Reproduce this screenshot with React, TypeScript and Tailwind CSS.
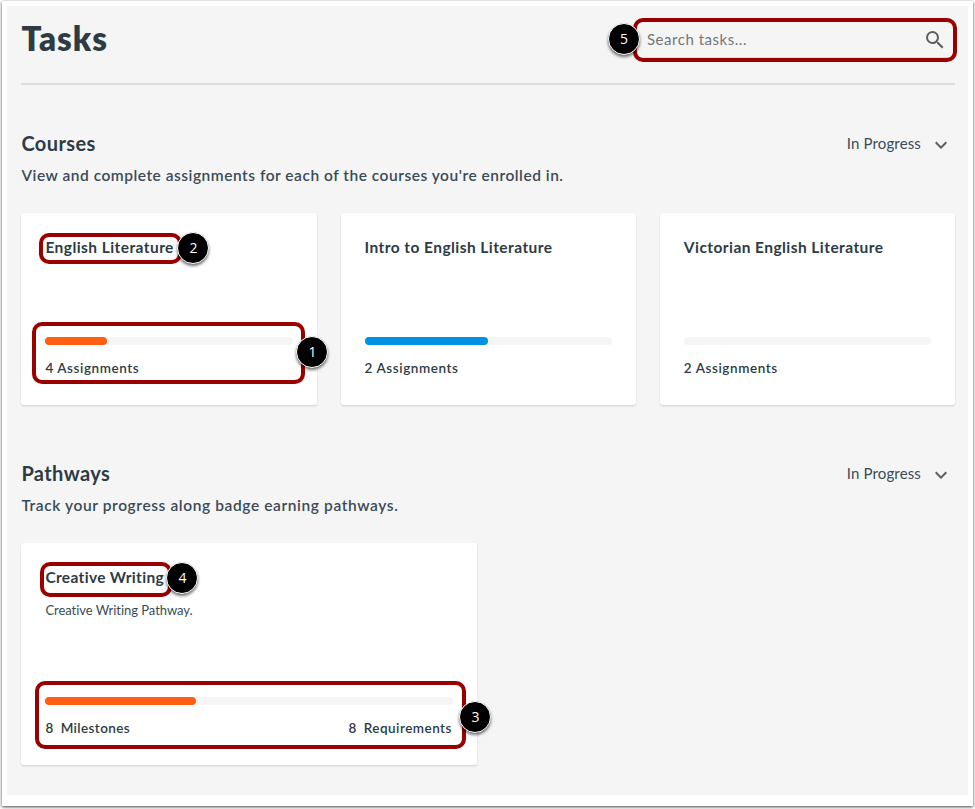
import type { ReactNode } from 'react';
import { MdExpandMore, MdSearch } from 'react-icons/md';

interface Course {
  title: string;
  assignments: number;
  progress: number;
  barColor: string;
}

const courses: Course[] = [
  { title: 'English Literature', assignments: 4, progress: 25, barColor: 'bg-[#ff5e13]' },
  { title: 'Intro to English Literature', assignments: 2, progress: 50, barColor: 'bg-[#0190e3]' },
  { title: 'Victorian English Literature', assignments: 2, progress: 0, barColor: 'bg-[#0190e3]' },
];

// Red frame drawn over the element it annotates
function Outline({ className }: { className: string }) {
  return <div className={`absolute pointer-events-none border-4 border-[#990000] rounded-[10px] ${className}`} />;
}

// Numbered marker that sits on the edge of an outline
function Marker({ label, className }: { label: string; className: string }) {
  return (
    <div
      className={`absolute z-10 flex items-center justify-center w-8 h-8 rounded-full border border-white bg-black text-white text-[14px] leading-none font-['Open_Sans',sans-serif] shadow-[0_2px_3px_rgba(0,0,0,0.55)] ${className}`}
    >
      {label}
    </div>
  );
}

function ProgressBar({ value, color }: { value: number; color: string }) {
  return (
    <div className="h-2 rounded-full bg-[#f5f5f5]">
      {value > 0 && <div className={`h-full rounded-full ${color}`} style={{ width: `${value}%` }} />}
    </div>
  );
}

interface SectionProps {
  title: string;
  description: string;
  descriptionClass: string;
  children: ReactNode;
}

function Section({ title, description, descriptionClass, children }: SectionProps) {
  return (
    <section>
      <div className="flex items-center justify-between h-6">
        <h2 className="text-[20px] font-bold tracking-[0.4px]">{title}</h2>
        <button className="flex items-center gap-2 pr-[2px] text-[15px] tracking-[0.15px] text-[#394b58]">
          <span>In Progress</span>
          <MdExpandMore className="w-6 h-6 mt-[3px] text-[#5f5f5f]" />
        </button>
      </div>
      <p className={`mt-2 h-6 leading-6 text-[15.5px] font-semibold text-[#394b58] ${descriptionClass}`}>{description}</p>
      <div className="mt-[26px]">{children}</div>
    </section>
  );
}

function CourseCard({ course, annotated }: { course: Course; annotated: boolean }) {
  return (
    <div className="relative h-[192px] px-6 pt-[23px] bg-white rounded-[3px] shadow-[0_1px_2px_rgba(0,0,0,0.16)]">
      <h3 className="h-[101px] leading-[22px] text-[15.5px] font-bold tracking-[0.44px]">{course.title}</h3>
      <ProgressBar value={course.progress} color={course.barColor} />
      <p className="mt-[13px] leading-5 text-[13.5px] font-semibold tracking-[0.57px]">{course.assignments} Assignments</p>
      {annotated && (
        <>
          <Outline className="left-[18px] top-[20px] w-[143px] h-[31px]" />
          <Marker label="2" className="left-[156px] top-[19px]" />
          <Outline className="left-[11px] top-[109px] w-[273px] h-[62px]" />
          <Marker label="1" className="left-[275px] top-[123px]" />
        </>
      )}
    </div>
  );
}

function PathwayCard() {
  return (
    <div className="relative w-[455.5px] h-[222px] px-6 pt-[23px] bg-white rounded-[3px] shadow-[0_1px_2px_rgba(0,0,0,0.16)]">
      <h3 className="leading-[22px] text-[15.5px] font-bold tracking-[0.33px]">Creative Writing</h3>
      <p className="mt-3 h-[97px] leading-5 text-[13px] tracking-[-0.04px] text-[#394b58]">Creative Writing Pathway.</p>
      <ProgressBar value={37} color="bg-[#ff5e13]" />
      <div className="mt-[13px] flex justify-between leading-5 text-[13.5px] font-semibold tracking-[0.4px]">
        <div className="flex gap-[7px]">
          <span>8</span>
          <span>Milestones</span>
        </div>
        <div className="flex gap-[7px] pr-px tracking-[0.48px]">
          <span>8</span>
          <span>Requirements</span>
        </div>
      </div>
      <Outline className="left-[19px] top-[19px] w-[132px] h-[35px]" />
      <Marker label="4" className="left-[145px] top-[19px]" />
      <Outline className="left-[14px] top-[138px] w-[431px] h-[68px]" />
      <Marker label="3" className="left-[438px] top-[158px]" />
    </div>
  );
}

export default function App() {
  return (
    <div className="w-[975px] h-[809px] pl-[2px] pt-px overflow-hidden bg-white font-['Lato',sans-serif] text-[#2d3b45]">
      <div className="w-[971px] h-[805px] p-[5px] pb-[11px] bg-white shadow-[0_1px_3px_rgba(0,0,0,0.75)]">
        <main className="h-full pl-[14.4px] pr-[13px] bg-[#f5f5f5]">
          <header className="flex justify-between h-[79px] pt-3 border-b-2 border-[#d9dee1]">
            <h1 className="text-[33px] leading-10 font-extrabold tracking-[1px]">Tasks</h1>
            <div className="relative flex items-center justify-between w-[321px] h-10 pt-[3px] pl-[13px] pr-2 border-b border-[#d9dee1] text-[#757575]">
              <span className="text-[15px] tracking-[0.53px]">Search tasks...</span>
              <MdSearch className="w-6 h-6 mt-px text-[#5f5f5f]" />
              <Outline className="-left-px top-0 w-[324px] h-11" />
              <Marker label="5" className="-left-[26px] top-[5px]" />
            </div>
          </header>
          <div className="mt-[46px] flex flex-col gap-14">
            <Section
              title="Courses"
              description="View and complete assignments for each of the courses you're enrolled in."
              descriptionClass="tracking-[0.52px]"
            >
              <div className="grid grid-cols-3 gap-6">
                {courses.map((course, idx) => (
                  <CourseCard key={course.title} course={course} annotated={idx === 0} />
                ))}
              </div>
            </Section>
            <Section
              title="Pathways"
              description="Track your progress along badge earning pathways."
              descriptionClass="tracking-[0.61px]"
            >
              <PathwayCard />
            </Section>
          </div>
        </main>
      </div>
    </div>
  );
}
